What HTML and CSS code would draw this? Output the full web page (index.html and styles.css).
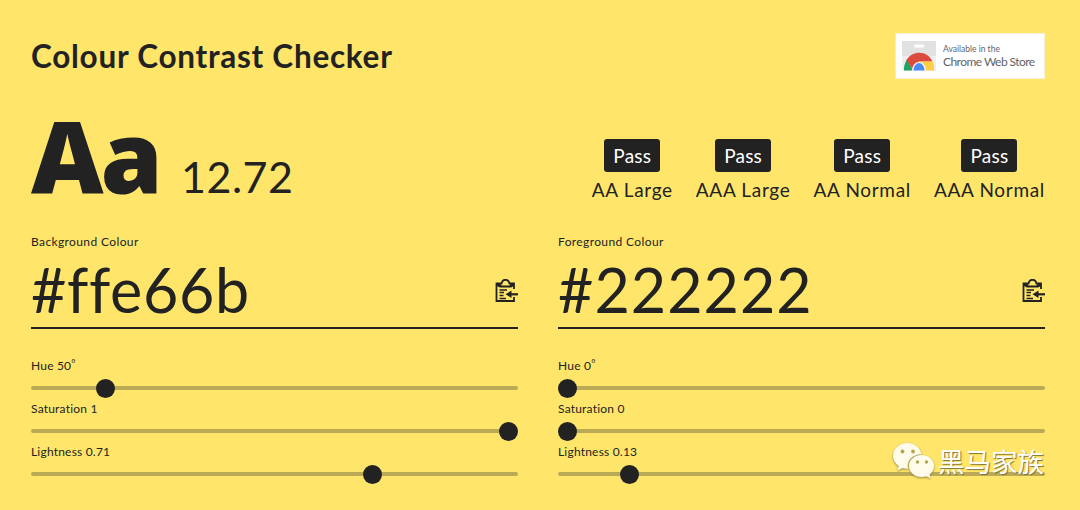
FILE: index.html
```html
<!DOCTYPE html>
<html lang="en">
  <head>
    <meta charset="UTF-8" />
    <meta name="viewport" content="width=device-width, initial-scale=1.0" />
    <title>Colour Contrast Checker</title>
    <link rel="stylesheet" href="styles.css">
  </head>
  <body>
    <header>
      <h1>Colour Contrast Checker</h1>
      <a class="store" href="#">
        <svg class="store-icon" viewBox="0 0 34 30" width="34" height="30">
          <rect width="34" height="15" fill="#e1e1e1" />
          <rect y="15" width="34" height="15" fill="#eeeeee" />
          <rect x="12" y="3.500" width="10.500" height="3" rx="1.500" fill="#fff" />
          <path d="M2 29.500A15.500 17 0 0 1 5 18.500L11 29.500Z" fill="#1da462" />
          <path d="M4.500 19C11 8.500 26 9.500 30.500 20.500H17L11 29Z" fill="#dd4b3e" />
          <path d="M17 20.500H30.500A16 16 0 0 1 32 29.500H20Z" fill="#ffcd46" />
          <path d="M10 29.500A7 8.500 0 0 1 24 29.500Z" fill="#fff" />
          <path d="M11.500 29.500A5.500 7.500 0 0 1 22.500 29.500Z" fill="#4c8bf5" />
        </svg>
        <span class="store-text">
          <span class="store-small">Available in the</span>
          <span class="store-big">Chrome Web Store</span>
        </span>
      </a>
    </header>
    <section class="summary">
      <div class="contrast">
        <span class="sample">Aa</span>
        <span class="ratio">12.72</span>
      </div>
      <ul class="ratings">
        <li><span class="badge">Pass</span><span class="level">AA Large</span></li>
        <li><span class="badge">Pass</span><span class="level">AAA Large</span></li>
        <li><span class="badge">Pass</span><span class="level">AA Normal</span></li>
        <li><span class="badge">Pass</span><span class="level">AAA Normal</span></li>
      </ul>
    </section>
    <main>
      <section class="colour">
        <label class="caption">Background Colour</label>
        <div class="hex">
          <span class="value background">#ffe66b</span>
          <svg class="paste" viewBox="0 0 24 24" width="24" height="24">
            <path d="M20 10V4.500H15.500C14.500 -0.500 8.500 -0.500 7.500 4.500H2.500V22H20V18" />
            <path class="solid" d="M3 4H5.500L7.500 6.500H15.500L17.500 4H20V7L17 8.500H6L3 7Z" />
            <path class="lines" d="M5.500 11H13M5.500 13.500H10M5.500 16.500H9.500M5.500 19.500H12" />
            <path class="arrow" d="M16 15.300H24" />
            <path class="solid" d="M17.500 11.500V19L11.500 15.300Z" />
          </svg>
        </div>
        <div class="slider">
          <label for="bg-hue">Hue 50<sup>°</sup></label>
          <input id="bg-hue" type="range" min="0" max="360" value="50" />
        </div>
        <div class="slider">
          <label for="bg-sat">Saturation 1</label>
          <input id="bg-sat" type="range" min="0" max="1" step="0.01" value="1" />
        </div>
        <div class="slider">
          <label for="bg-light">Lightness 0.71</label>
          <input id="bg-light" type="range" min="0" max="1" step="0.01" value="0.71" />
        </div>
      </section>
      <section class="colour">
        <label class="caption">Foreground Colour</label>
        <div class="hex">
          <span class="value">#222222</span>
          <svg class="paste" viewBox="0 0 24 24" width="24" height="24">
            <path d="M20 10V4.500H15.500C14.500 -0.500 8.500 -0.500 7.500 4.500H2.500V22H20V18" />
            <path class="solid" d="M3 4H5.500L7.500 6.500H15.500L17.500 4H20V7L17 8.500H6L3 7Z" />
            <path class="lines" d="M5.500 11H13M5.500 13.500H10M5.500 16.500H9.500M5.500 19.500H12" />
            <path class="arrow" d="M16 15.300H24" />
            <path class="solid" d="M17.500 11.500V19L11.500 15.300Z" />
          </svg>
        </div>
        <div class="slider">
          <label for="fg-hue">Hue 0<sup>°</sup></label>
          <input id="fg-hue" type="range" min="0" max="360" value="0" />
        </div>
        <div class="slider">
          <label for="fg-sat">Saturation 0</label>
          <input id="fg-sat" type="range" min="0" max="1" step="0.01" value="0" />
        </div>
        <div class="slider">
          <label for="fg-light">Lightness 0.13</label>
          <input id="fg-light" type="range" min="0" max="1" step="any" value="0.1333" />
        </div>
      </section>
    </main>
    <div class="watermark">
      <svg viewBox="0 0 44 38" width="44" height="38">
        <path d="M15.500 1C7.300 1 1 6.700 1 13.800C1 18 3.300 21.700 6.800 24L5.500 28.500L10.500 26C12.400 26.600 14.200 26.800 16 26.700C14 18.500 20.500 12.500 29.500 12.200C28 5.500 22.300 1 15.500 1Z" />
        <path d="M29.500 13C22.500 13 17 17.800 17 24C17 30.200 22.500 35 29.500 35C31.200 35 32.800 34.700 34.200 34.200L38.800 36.500L37.500 32.500C40.500 30.500 42 27.500 42 24C42 17.800 36.500 13 29.500 13Z" />
        <g class="eyes">
          <circle cx="10.500" cy="9.500" r="1.900" />
          <circle cx="21" cy="9.500" r="1.900" />
          <circle cx="25.500" cy="20" r="1.700" />
          <circle cx="34.500" cy="20" r="1.700" />
        </g>
      </svg>
      <span>黑马家族</span>
    </div>
  </body>
</html>
```
FILE: styles.css
```css
* {
  box-sizing: border-box;
}
body {
  height: 510px;
  margin: 0;
  padding: 33px 35px 0 31px;
  overflow: hidden;
  background-color: #ffe66b;
  color: #222;
  font-family: Lato, "Liberation Sans", sans-serif;
}
header {
  display: flex;
  justify-content: space-between;
  height: 46px;
  margin-bottom: 26px;
}
h1 {
  margin: 0;
  font-size: 31.5px;
  font-weight: 700;
  line-height: 46px;
  letter-spacing: 0.73px;
}
.store {
  display: flex;
  align-items: center;
  gap: 7px;
  width: 150px;
  height: 46px;
  padding: 0 6px;
  background-color: #fff;
  border: 1px solid #f3eed6;
  color: #5f6368;
  text-decoration: none;
}
.store-icon {
  flex-shrink: 0;
}
.store-text {
  display: flex;
  flex-direction: column;
  white-space: nowrap;
}
.store-small {
  font-size: 8.5px;
  line-height: 11px;
}
.store-big {
  font-size: 12px;
  line-height: 13px;
  letter-spacing: -0.55px;
}
.summary {
  display: flex;
  justify-content: space-between;
  align-items: flex-end;
  height: 100px;
  margin-bottom: 28px;
}
.contrast {
  display: flex;
  align-items: baseline;
  height: 100px;
}
.sample {
  width: 150px;
  font-family: "Open Sans", sans-serif;
  font-size: 100px;
  font-weight: 800;
  line-height: 99px;
  letter-spacing: -3px;
}
.ratio {
  font-size: 43px;
  letter-spacing: 0.5px;
}
.ratings {
  display: flex;
  gap: 23px;
  margin: 0;
  padding: 0 0 3px;
  list-style: none;
  font-size: 19px;
  white-space: nowrap;
}
.ratings li {
  display: flex;
  flex-direction: column;
  align-items: center;
  gap: 6px;
}
.badge {
  width: 56px;
  border-radius: 3px;
  background-color: #222;
  color: #fff;
  line-height: 33px;
  letter-spacing: 0.2px;
  text-align: center;
}
.level {
  line-height: 24px;
  letter-spacing: 0.68px;
}
main {
  display: grid;
  grid-template-columns: 1fr 1fr;
  gap: 40px;
}
.caption {
  display: block;
  font-size: 12px;
  line-height: 17px;
  letter-spacing: 0.38px;
}
.hex {
  display: flex;
  justify-content: space-between;
  align-items: center;
  height: 79px;
  margin-bottom: 28px;
  padding-top: 3px;
  border-bottom: 2px solid #222;
}
.value {
  font-size: 61px;
  line-height: 74px;
  letter-spacing: 1px;
}
.background {
  letter-spacing: 0.65px;
}
.paste {
  fill: none;
  stroke: #222;
  stroke-width: 1.8;
  margin-top: 2px;
}
.solid {
  fill: #222;
  stroke: none;
}
.lines {
  stroke-width: 1.5;
}
.arrow {
  stroke-width: 2.2;
}
.slider {
  height: 43px;
}
.slider label {
  display: block;
  font-size: 12px;
  line-height: 18px;
  letter-spacing: 0.2px;
}
.slider sup {
  font-size: 10px;
  line-height: 0;
  vertical-align: 3px;
}
input[type="range"] {
  display: block;
  width: 100%;
  height: 4px;
  margin: 11px 0 0;
  border-radius: 2px;
  background-color: #bbaa55;
  appearance: none;
}
input[type="range"]::-webkit-slider-thumb {
  width: 19px;
  height: 19px;
  border-radius: 50%;
  background-color: #222;
  appearance: none;
}
.watermark {
  position: absolute;
  top: 442px;
  left: 892px;
  display: flex;
  gap: 2px;
  color: #fff;
  font-family: "Noto Sans CJK SC", sans-serif;
  font-size: 26.5px;
  font-weight: 400;
  line-height: 38px;
  white-space: nowrap;
  text-shadow: 1px 1px 1px #7d7235;
}
.watermark svg {
  fill: #fffbea;
  filter: drop-shadow(0 1px 1px #8f8340);
}
.eyes {
  fill: #b5a549;
}
```
